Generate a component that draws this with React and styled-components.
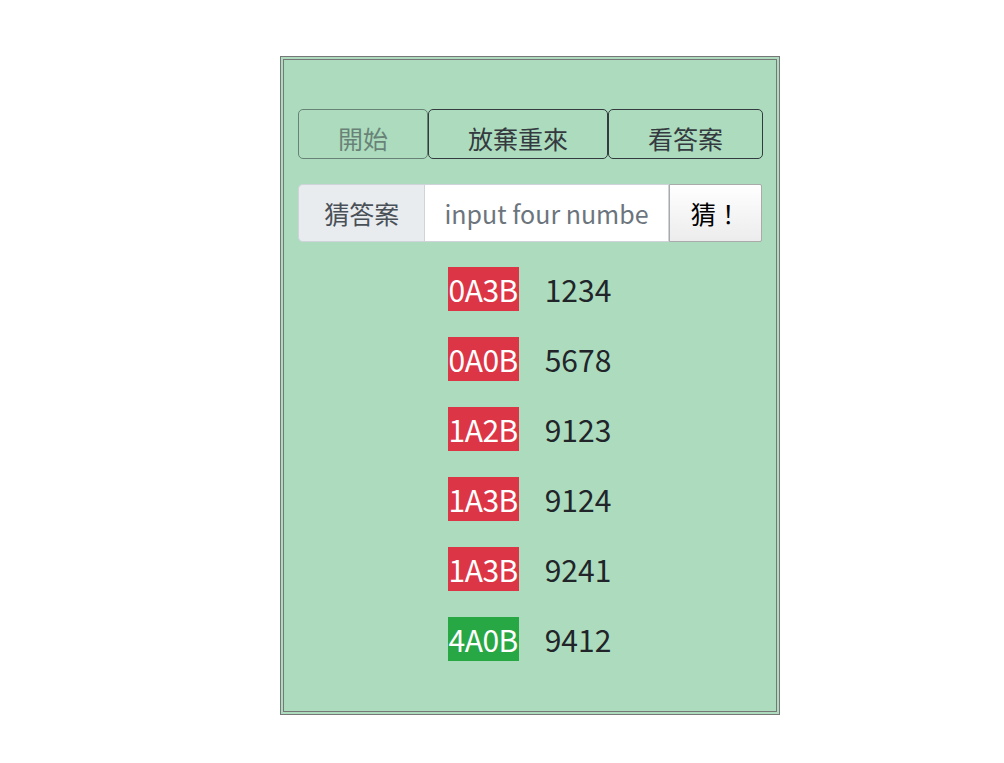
import styled, { createGlobalStyle } from 'styled-components'

const GlobalStyle = createGlobalStyle`
  body {
    margin: 0;
    background: #fff;
    font-family: "Noto Sans CJK TC", "Noto Sans", sans-serif;
    color: #212529;
  }
`

const guesses = [
  { result: '0A3B', num: '1234' },
  { result: '0A0B', num: '5678' },
  { result: '1A2B', num: '9123' },
  { result: '1A3B', num: '9124' },
  { result: '1A3B', num: '9241' },
  { result: '4A0B', num: '9412' },
]

const App = () => {
  return (
    <>
      <GlobalStyle />
      <Page>
        <GameBox>
          <ButtonRow>
            <ActionButton disabled>開始</ActionButton>
            <ActionButton>放棄重來</ActionButton>
            <ActionButton>看答案</ActionButton>
          </ButtonRow>
          <InputGroup>
            <Prepend>猜答案</Prepend>
            <GuessInput placeholder="input four numbers" />
            <GuessButton>猜！</GuessButton>
          </InputGroup>
          <History>
            { guesses.map( (g, idx) => (
              <HistoryRow key={idx}>
                <Badge win={g.result === '4A0B'}>{g.result}</Badge>
                <Number>{g.num}</Number>
              </HistoryRow>
            )) }
          </History>
        </GameBox>
      </Page>
    </>
  )
}

const Page = styled.div`
  display: flex;
  justify-content: center;
  padding-top: 56px;
  padding-left: 56px;
`

const GameBox = styled.div`
  box-sizing: border-box;
  width: 500px;
  height: 659px;
  border: 4px double #777;
  background: #acdcbd;
  padding: 49px 14px 0 14px;
`

const ButtonRow = styled.div`
  display: flex;
`

const ActionButton = styled.button`
  box-sizing: border-box;
  flex-shrink: 0;
  white-space: nowrap;
  font-family: inherit;
  font-size: 25px;
  line-height: 36px;
  color: #343a40;
  background: transparent;
  border: 1px solid #343a40;
  border-radius: 5px;
  padding: 10px 39px 2px;
  height: 50px;
  &:disabled {
    opacity: 0.55;
  }
`

const InputGroup = styled.div`
  display: flex;
  margin-top: 25px;
  height: 58px;
`

const Prepend = styled.div`
  box-sizing: border-box;
  width: 127px;
  display: flex;
  align-items: center;
  justify-content: center;
  background: #e9ecef;
  border: 1px solid #ced4da;
  border-right: none;
  border-radius: 5px 0 0 5px;
  font-size: 25px;
  color: #495057;
`

const GuessInput = styled.input`
  box-sizing: border-box;
  width: 245px;
  border: 1px solid #ced4da;
  outline: none;
  padding: 0 19px;
  font-family: inherit;
  font-size: 25px;
  color: #495057;
  &::placeholder {
    color: #6c757d;
  }
`

const GuessButton = styled.button`
  box-sizing: border-box;
  width: 93px;
  font-family: inherit;
  font-size: 25px;
  color: #000;
  background: linear-gradient(#ffffff, #ececec);
  border: 1px solid #aaa;
  border-radius: 0 2px 2px 0;
`

const History = styled.div`
  display: flex;
  flex-direction: column;
  align-items: center;
  margin-top: 25px;
  gap: 26px;
`

const HistoryRow = styled.div`
  display: flex;
  align-items: center;
  gap: 26px;
  padding-right: 1px;
`

const Badge = styled.span`
  display: flex;
  align-items: center;
  justify-content: center;
  width: 71px;
  height: 44px;
  background: ${ props => props.win ? '#28a745' : '#dc3545' };
  color: #fff;
  font-size: 30px;
  letter-spacing: -0.5px;
`

const Number = styled.span`
  font-size: 30px;
  color: #212529;
`

export default App
